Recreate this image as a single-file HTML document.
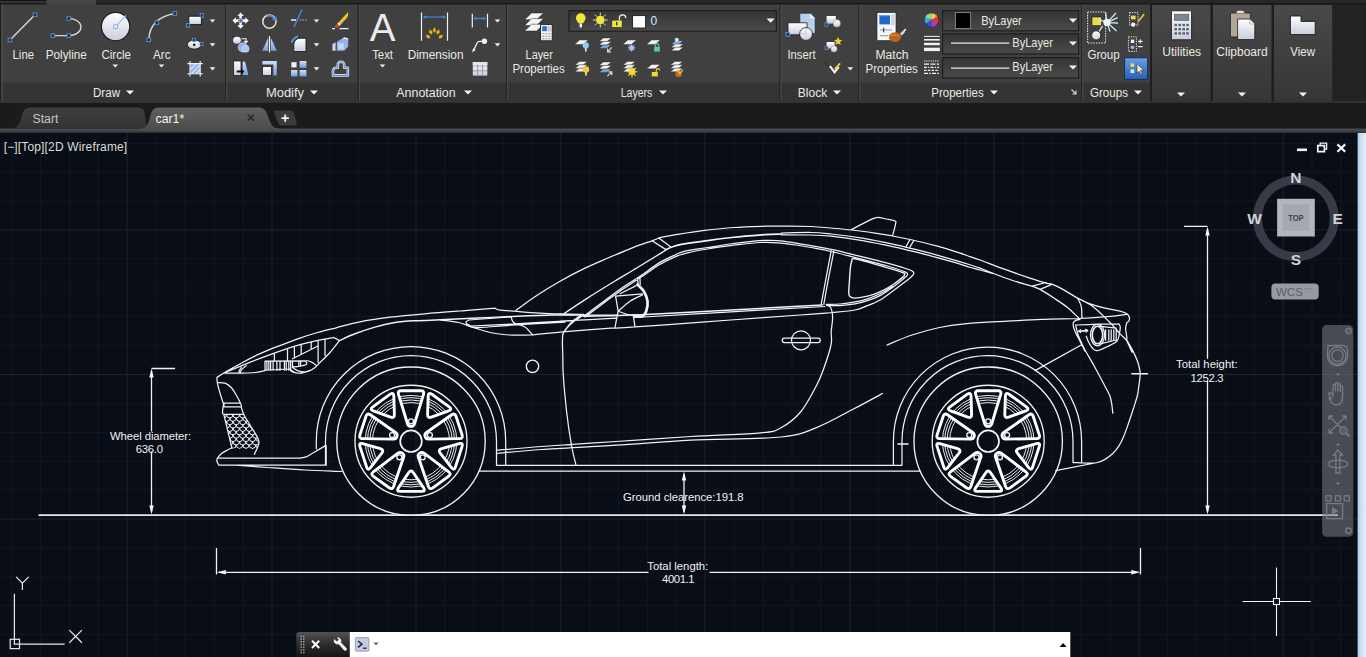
<!DOCTYPE html>
<html><head><meta charset="utf-8"><title>AutoCAD - car1</title>
<style>
*{box-sizing:border-box;margin:0;padding:0}
html,body{width:1366px;height:657px;overflow:hidden;background:#090d16;font-family:"Liberation Sans",sans-serif;}
#app{position:relative;width:1366px;height:657px;overflow:hidden;background:#090d16}
#draw{position:absolute;left:0;top:0;width:1366px;height:657px;background:#090d16;overflow:hidden}
.w1{fill:none;stroke:#eef1f5;stroke-width:1.35}
.w2{fill:none;stroke:#e6eaef;stroke-width:1}
.w3{fill:none;stroke:#ffffff;stroke-width:2.9;stroke-linejoin:round}
.w4{fill:none;stroke:#f2f4f7;stroke-width:1.7}
.dt{font-family:"Liberation Sans",sans-serif;font-size:11.3px;fill:#f0f2f5;letter-spacing:0.35px}
<!--CSS-->
</style></head>
<body><div id="app">
<div id="draw">
<svg id="dsvg" width="1366" height="657" viewBox="0 0 1366 657" style="position:absolute;left:0;top:0">
<path d="M11.5 133V657M40.5 133V657M69.5 133V657M98.5 133V657M156 133V657M185 133V657M214 133V657M243 133V657M300.5 133V657M329.5 133V657M358.5 133V657M387.5 133V657M445 133V657M474 133V657M503 133V657M532 133V657M589.5 133V657M618.5 133V657M647.5 133V657M676.5 133V657M734 133V657M763 133V657M792 133V657M821 133V657M878.5 133V657M907.5 133V657M936.5 133V657M965.5 133V657M1023 133V657M1052 133V657M1081 133V657M1110 133V657M1167.5 133V657M1196.5 133V657M1225.5 133V657M1254.5 133V657M1312 133V657M1341 133V657M0 143.5H1366M0 172H1366M0 201H1366M0 259H1366M0 288H1366M0 316.5H1366M0 345.5H1366M0 403.5H1366M0 432.5H1366M0 461H1366M0 490H1366M0 548H1366M0 577H1366M0 605.5H1366M0 634.5H1366" stroke="#10161f" stroke-width="1" fill="none"/><path d="M127 133V657M272 133V657M416 133V657M561 133V657M705 133V657M850 133V657M994 133V657M1139 133V657M1283 133V657M0 230H1366M0 374.5H1366M0 519H1366" stroke="#1a2430" stroke-width="1" fill="none"/>
<g fill="none" stroke="#f0f3f6" stroke-linecap="round" stroke-linejoin="round"><path d="M216.9 377.5C218.2 376.6 220.7 374.8 225 372.2C229.3 369.8 236.5 365.7 242.5 362.5C248.5 359.3 255 355.9 261.2 353.1C267.5 350.3 273.5 348.1 280 345.6C286.5 343.1 293.8 340.3 300 338.1C306.2 335.9 311.5 334.2 317.5 332.5C323.5 330.8 329.2 329.5 336.2 327.8C343.3 326 351 323.5 360 321.8C369 320 379.2 318.6 390 317.2C400.8 315.9 413.3 314.8 425 313.8C436.7 312.7 453.3 311.5 460 311C466.7 310.5 459.2 311.1 465 310.6C470.8 310.1 490 308.5 495 308.1M495 308.1C495.6 308.4 495.4 309.2 498.8 309.8C502.1 310.3 508.1 310.7 515 311.2C521.9 311.8 531.9 312.7 540 313.1C548.1 313.6 556.5 313.8 563.8 314C571 314.2 580.4 314.5 583.8 314.6M516.2 310C519.8 307.5 530.2 299.8 537.5 295C544.8 290.2 552.5 285.5 560 281.2C567.5 277 574.8 273.1 582.5 269.4C590.2 265.6 598.3 262.2 606.2 258.8C614.2 255.3 622.3 251.8 630 248.8C637.7 245.7 647.7 242.4 652.5 240.6C657.3 238.9 657.7 238.5 658.8 238.1M658.8 237.9C661.9 237.3 670.2 235.6 677.5 234.4C684.8 233.2 693.1 231.8 702.5 230.6C711.9 229.5 723.3 228.2 733.8 227.5C744.2 226.8 755.6 226.5 765 226.2C774.4 226 782.4 226 790 226C797.6 226 804.9 226.2 810.8 226.5C816.6 226.8 818.2 226.9 825 227.5C831.8 228.1 842.9 229.1 851.2 230C859.6 230.9 868.1 232.1 875 233.1C881.9 234.1 886.2 234.9 892.5 236C898.8 237.1 905 238.3 912.5 240C920 241.7 930.2 244.3 937.5 246.2C944.8 248.2 950.7 250.1 956.2 251.9C961.8 253.6 966.8 255.5 970.8 256.9C974.7 258.2 974.3 257.9 980 260C985.7 262.1 996.7 266.4 1005 269.4C1013.3 272.4 1023.1 275.8 1030 278.1C1036.9 280.4 1042.5 282.1 1046.2 283.1C1050 284.2 1049.4 283.1 1052.5 284.4C1055.6 285.6 1060.8 288.3 1065 290.6C1069.2 292.9 1073.3 295.9 1077.5 298.1C1081.7 300.3 1085.4 302.1 1090 303.8C1094.6 305.4 1100 306.9 1105 308.1C1110 309.4 1116.4 310.3 1120 311.2C1123.6 312.2 1125.3 312.7 1126.9 313.8C1128.4 314.8 1129.1 316.2 1129.4 317.5C1129.7 318.8 1129.2 320.4 1128.8 321.2C1128.3 322.1 1127.2 322.3 1126.9 322.5M851.2 229.8C854.6 228 866.9 221.4 871.2 219.4C875.6 217.3 875 217.6 877.5 217.5C880 217.4 883.3 218.4 886.2 219C889.2 219.6 893.4 220.2 895 221C896.6 221.8 896 221.2 895.6 223.8C895.2 226.2 893 234 892.5 236M652.5 241 L665.6 249.4M658.8 238.1 L671.2 247.2M563.8 313.8C567.7 311.1 579.4 303.3 587.5 298.1C595.6 292.9 604.2 287.6 612.5 282.5C620.8 277.4 628.8 272.8 637.5 267.5C646.2 262.2 660.3 253.6 665 250.6C669.7 247.7 665.5 249.9 665.6 249.8M781.2 233.1C786.2 233 802.4 232.4 810.8 232.5C819.1 232.6 822.6 233.1 831.2 234C839.9 234.9 852.1 236.4 862.5 238.1C872.9 239.9 883.3 242.1 893.8 244.4C904.2 246.7 915.6 249.5 925 251.9C934.4 254.3 942.4 256.6 950 258.8C957.6 260.9 965.8 263.4 970.8 265C975.8 266.6 976.4 266.8 980 268.1C983.6 269.5 987.3 271.1 992.5 273.1C997.7 275.1 1004.7 277.8 1011.2 280C1017.8 282.2 1027.1 284.7 1031.9 286.2C1036.7 287.8 1036.1 287.3 1040 289.4C1043.9 291.5 1050.4 295.7 1055 298.8C1059.6 301.8 1063.5 304.3 1067.5 307.5C1071.5 310.7 1076.9 316.4 1078.8 318.1M781.2 234.8C786.2 234.8 802.4 234.8 810.8 235C819.1 235.2 822.6 235.3 831.2 236.2C839.9 237.2 852.1 238.9 862.5 240.6C872.9 242.4 883.3 244.6 893.8 246.9C904.2 249.2 915.6 252 925 254.4C934.4 256.8 942.4 259.1 950 261.2C957.6 263.4 965.8 266 970.8 267.5C975.8 269 976.4 269 980 270C983.6 271 990.4 272.9 992.5 273.5M910 239.4 L906.2 246.2M913.8 240.6 L910 246.9M1031.9 286.2 L1046.2 282.5M1040 289.4 L1051.9 284.4M1077.5 298.1C1078.1 299.5 1080.5 302.9 1081.2 306.2C1082 309.6 1081.8 316.1 1081.9 318.1M1077.5 298.1C1080 299.5 1087.1 302.2 1092.5 306.2C1097.9 310.3 1105.4 317.9 1110 322.5C1114.6 327.1 1117.3 330.8 1120 333.8C1122.7 336.7 1124.3 337 1126.2 340C1128.2 343 1130.8 350.2 1131.9 351.9C1132.9 353.5 1131.6 348.4 1132.5 350C1133.4 351.6 1136.7 359.4 1137.5 361.2M887 345C891.2 343.3 903.2 337.9 912 335C920.8 332.1 930.8 329.4 939.5 327.5C948.2 325.6 953.2 324.8 964.5 323.8C975.8 322.7 994.2 322 1007 321.2C1019.8 320.5 1029.3 319.8 1041.2 319.4C1053.2 318.9 1068.3 318.9 1078.8 318.5C1089.2 318.1 1095.7 317.6 1103.8 316.9C1111.8 316.2 1123 314.8 1126.9 314.4M1126.9 322.5C1126.7 323.5 1125.6 326.2 1125.6 328.8C1125.6 331.2 1126.7 335.6 1126.9 337.5C1127.1 339.4 1125.9 337.9 1126.9 340C1127.8 342.1 1130.7 346.5 1132.5 350C1134.3 353.5 1136.2 357.7 1137.5 361.2C1138.8 364.8 1139.6 368.5 1140 371.2C1140.4 374 1140.2 375 1140 377.5C1139.8 380 1139.2 383.3 1138.8 386.2C1138.3 389.2 1138.3 391.5 1137.5 395C1136.7 398.5 1135.2 402.9 1133.8 407.5C1132.3 412.1 1130.4 417.7 1128.8 422.5C1127.1 427.3 1125.4 432.3 1123.8 436.2C1122.1 440.2 1120.6 443.3 1118.8 446.2C1116.9 449.2 1114.8 451.6 1112.5 453.8C1110.2 455.9 1107.5 457.9 1105 459.4C1102.5 460.8 1100 461.9 1097.5 462.5C1095 463.1 1094.1 463.1 1090 463.1C1085.9 463.1 1075.9 462.6 1073.1 462.5M1097.5 462.5 L1055.6 470.6M1081.2 342.5C1081.9 343.8 1082.7 345.8 1085 350C1087.3 354.2 1091.7 361.5 1095 367.5C1098.3 373.5 1102.5 381.5 1105 386.2C1107.5 391 1108.9 393.1 1110 396.2C1111.1 399.4 1111.4 402.2 1111.9 405C1112.3 407.8 1112.6 411.8 1112.8 413.1M1081.2 345 L1035 370.6M216.9 377.5C217 378.5 216.9 380.8 217.5 383.8C218.1 386.7 219.6 391.5 220.6 395C221.7 398.5 223.2 403.6 223.8 405C224.3 406.4 223.8 403.4 223.8 403.1M217.5 382.5C218.8 382.6 222.7 382.3 225 383.1C227.3 384 229.4 385.5 231.2 387.5C233.1 389.5 234.6 392.1 236.2 395C237.9 397.9 240.4 403 241.2 405C242.1 407 240.8 405.3 241.2 406.9C241.7 408.4 242.3 411.4 243.8 414.4C245.2 417.4 247.7 421.1 250 425C252.3 428.9 256 434.4 257.5 437.5C259 440.6 259.3 440.9 258.8 443.8C258.2 446.6 255.1 452.6 254.4 454.4M223.8 403.1 L239.4 403.1M223.1 406.9 L241.2 406.9M223.8 403.1C223.5 404.7 222.5 410.6 222.5 412.5C222.5 414.4 223.5 414.1 223.8 414.4M223.8 414.4 L243.8 414.4M223.8 414.4 L231.9 448.1M231.9 447.9C231.1 448.2 229.3 449 227.5 450C225.7 451 222.9 452.4 221.2 453.8C219.6 455.1 218.2 456.9 217.5 458.1C216.8 459.4 216.7 460.1 216.9 461.2C217.1 462.4 218.4 464.4 218.8 465M218.8 465 L326.2 465 L326.2 445.6M218.8 458.1 L300 458.1M300 458.1C301 457.9 304 457.8 306.2 456.9C308.5 455.9 310.5 454.4 313.8 452.5C317 450.6 323.6 446.8 325.6 445.6M236.2 465.2C241.5 465.6 256 466.7 267.5 467.5C279 468.3 292.6 469.3 305 470C317.4 470.7 335.7 471.2 341.9 471.5M225 372.5C228.5 371 239.2 366.6 246.2 363.8C253.3 360.9 259.8 358.4 267.5 355.6C275.2 352.8 285.2 349.2 292.5 346.9C299.8 344.6 305 343.3 311.2 341.9C317.5 340.4 326.2 338.9 330 338.1C333.8 337.4 333.1 337.6 333.8 337.5M333.8 337.5 L339.4 340.6M339.4 340.6C337.8 342.6 333 349.1 330 352.5C327 355.9 323.8 358.8 321.2 361.2C318.8 363.8 317.1 365.8 315 367.5C312.9 369.2 311.2 370.3 308.8 371.2C306.2 372.2 302.7 373 300 373.1C297.3 373.2 294.2 372.5 292.5 371.9C290.8 371.2 290.4 369.8 290 369.4M225 373.1C227.9 373.1 237.5 373.2 242.5 373.1C247.5 373 251.2 372.9 255 372.5C258.8 372.1 263.3 370.9 265 370.6M292.5 358.8 L317.5 346.2M246.2 365.6C245.5 366.2 242.9 368.1 241.9 369.4C240.8 370.6 240.3 372.5 240 373.1M241.2 367.5C240.9 368 239.8 369.7 239.4 370.6C239 371.6 238.9 372.7 238.8 373.1M274.4 353.8 L274.4 361.2M287.5 348.8 L287.5 360.6M294.4 346.5 L294.4 357.8M301.2 344.4 L301.2 354M311.2 341.9 L311.2 349M318.1 340 L318.1 362.5M325 338.8 L325 355.6M265 361.2 L305 360.9M265 370.2 L290 369M265 361.2 L265 370.2M266.9 361.2 L266.9 370.2M268.8 361.2 L268.8 370.2M270.6 361.2 L270.6 370.2M273.1 361.2 L273.1 370.2M276.9 361.2 L276.9 370.2M280 361.2 L280 370.2M284.4 361.2 L284.4 370.2M286.2 361.2 L286.2 370.2M288.8 361.2 L288.8 370.2M290.6 361.2 L290.6 370.2M292.5 361.2 L292.5 367.5M298.8 361 L298.8 366.2M300.6 361 L300.6 366.2M305 360.9C305.2 361.1 306.3 361.9 306.5 362.5C306.7 363.1 307.3 363.9 306.2 364.5C305.2 365.1 302.3 365.8 300 366.2C297.7 366.7 293.8 366.9 292.5 367M290 369C290.8 369.6 292.9 371.8 295 372.5C297.1 373.2 301.2 373.1 302.5 373.2M292.5 367.5C293.3 368 295.4 369.9 297.5 370.6C299.6 371.4 302.7 372 305 371.9C307.3 371.8 310.2 370.3 311.2 370M306.2 360.6C307.1 360.8 309.6 361.1 311.2 361.9C312.9 362.6 315.4 364.7 316.2 365.2M440 320C443.1 320.4 453.5 321.4 458.8 322.5C464 323.6 466 325.2 471.2 326.9C476.5 328.5 483.8 331.1 490 332.5C496.2 333.9 501.7 334.6 508.8 335C515.8 335.4 523.5 335.3 532.5 334.8C541.5 334.2 549.5 333 562.5 331.9C575.5 330.8 602 328.8 610.8 328.1C619.5 327.5 611 328.3 615 328.1C619 327.9 623.3 327.7 635 326.9C646.7 326.1 669 324.5 685 323.4C701 322.2 711.6 321.4 730.8 320C749.9 318.6 783 316.2 800 315C817 313.8 827.1 312.9 832.5 312.5M468.8 320 L511.2 316.9M469 320C468.5 320.3 466.6 321.2 466.2 321.9C465.9 322.5 466 323.3 466.9 324C467.7 324.7 470.5 325.9 471.2 326.2M471.2 326.2C478.5 325.8 498.1 324.7 515 323.8C531.9 322.8 562.9 321.1 572.5 320.6M471.2 327.1C472.9 327.2 474 327.9 481.2 327.5C488.5 327.1 501 325.9 515 325C529 324.1 556.7 322.7 565 322.2M511.2 316.9C511.5 317.6 511.7 320.1 512.5 321.2C513.3 322.4 514.2 323.1 516.2 324C518.3 324.9 522.3 325.1 525 326.9C527.7 328.7 531.2 333.4 532.5 334.8M583.8 315C581.9 316.2 575.8 319.6 572.5 322.5C569.2 325.4 565.4 329.6 563.8 332.5C562.1 335.4 562.7 336.2 562.5 340C562.3 343.8 562.6 349.7 562.8 355C562.9 360.3 562.8 365.4 563.1 371.9C563.5 378.4 563.9 384.9 564.8 394C565.6 403.1 567.2 417.3 568.5 426.5C569.8 435.7 571 442.5 572.2 449C573.5 455.5 575.4 462.5 576 465.2M583.8 316.2C587.1 313.8 597.3 306 603.8 301.2C610.2 296.5 616.5 291.7 622.5 287.5C628.5 283.3 634 280.3 640 276.2C646 272.2 652.9 266.7 658.8 263.1C664.6 259.6 670.6 257 675 255C679.4 253 679.6 252.5 685 251.2C690.4 250 699.4 248.8 707.5 247.5C715.6 246.2 725 244.6 733.8 243.5C742.5 242.4 752.7 241.1 760 240.6C767.3 240.1 771.5 240.2 777.5 240.6C783.5 241 790.7 242.3 796.2 243.1C801.8 244 804.9 244.6 810.8 245.6C816.6 246.7 822.6 247.5 831.2 249.4C839.9 251.2 853.1 254.6 862.5 256.9C871.9 259.2 879.6 260.9 887.5 263.1C895.4 265.3 905.6 268.3 910 270C914.4 271.7 913.5 272 913.8 273.1C914 274.3 912.3 275.7 911.2 276.9C910.2 278 910.6 277.6 907.5 280C904.4 282.4 897.1 287.9 892.5 291.2C887.9 294.6 884.2 297.6 880 300C875.8 302.4 871.7 304 867.5 305.6C863.3 307.3 860.8 308.9 855 310C849.2 311.1 836.2 312.1 832.5 312.5M585 317.1C588.3 314.6 598.5 306.9 605 302.1C611.5 297.3 617.7 292.5 623.8 288.4C629.8 284.2 635.4 281 641.2 277.1C647.1 273.2 653.1 268.4 658.8 265C664.4 261.6 670.2 258.9 675 256.9C679.8 254.8 682.1 254.1 687.5 252.8C692.9 251.4 699.8 250.2 707.5 249C715.2 247.8 725 246.3 733.8 245.2C742.5 244.2 752.7 242.9 760 242.5C767.3 242.1 771.5 242.3 777.5 242.8C783.5 243.2 790.7 244.2 796.2 245C801.8 245.8 804.9 246.4 810.8 247.5C816.6 248.6 822.6 249.5 831.2 251.5C839.9 253.5 853.1 257 862.5 259.4C871.9 261.8 880.4 263.9 887.5 266C894.6 268.1 901.7 270.5 905 271.9C908.3 273.3 907.5 273.4 907.5 274.4C907.5 275.3 907.5 275.3 905 277.5C902.5 279.7 896.7 284.5 892.5 287.5C888.3 290.5 884.2 293.4 880 295.6C875.8 297.8 871.7 299.3 867.5 300.6C863.3 302 859.6 302.9 855 303.8C850.4 304.6 844.7 305.3 840 305.6C835.3 305.9 829.1 305.6 826.9 305.6M892.5 286.2C890.4 287.5 884.2 291.7 880 293.8C875.8 295.8 871.7 297.4 867.5 298.8C863.3 300.1 859.6 301 855 301.9C850.4 302.8 844.8 303.6 840 304C835.2 304.4 828.5 304.3 826.2 304.4M831.2 250.6 L824.4 286.9 L821.2 304.4M833.8 251.2 L826.9 286.9 L823.8 304.4M635 317.5C649.6 316.6 690.9 314.2 722.5 312.4C754.1 310.5 807.7 307.5 824.8 306.5M560 314.4C564 314.5 574.4 314.9 583.8 315C593.1 315.1 610.8 315 616.2 315M560 321.2C564.2 321 575.6 320.3 585 319.8C594.4 319.2 611 318.4 616.2 318.1M582.5 314.4C580.8 315.5 575.4 318.6 572.5 321.2C569.6 323.9 566.7 327.7 565 330C563.3 332.3 562.9 334.2 562.5 335M826.2 304.4C827 304.9 829.6 306.1 830.6 307.5C831.6 308.9 831.9 310.4 832.2 312.5C832.6 314.6 832.7 316.8 832.5 320C832.3 323.2 831.5 327.7 831.2 331.9C831 336 832.3 338.8 831 345C829.7 351.2 826 362.3 823.5 369.2C821 376.2 819.8 379.5 816 386.5C812.2 393.5 806.8 404.6 801 411.5C795.2 418.4 787.7 424.2 781 427.8C774.3 431.3 776 431.3 761 432.8C746 434.2 715.2 435 691 436.5C666.8 438 640.9 439.8 616 441.5C591.1 443.2 561.3 445 541.5 446.5C521.7 448 504.4 449.6 497 450.2M497 453.5C504.4 452.8 521.7 450.9 541.5 449.5C561.3 448.1 591.1 446.8 616 445.2C640.9 443.7 663.5 441.6 691 440.2C718.5 438.9 760.2 439.1 781 437C801.8 434.9 803.9 432.4 816 427.8C828.1 423.1 842.4 414.7 853.5 409C864.6 403.3 877.7 396.1 882.5 393.5M801 340.3m-9.5 0a9.5 9.5 0 1 0 19 0a9.5 9.5 0 1 0 -19 0M784.5 338h33.5a2.3 2.3 0 0 1 0 4.6h-33.5a2.3 2.3 0 0 1 0-4.6ZM615.6 296.2 L642.5 293.8M615.6 296.2 L618.1 311.2M618.1 311.2C620.1 311.9 626.4 314.4 630 315C633.6 315.6 638.3 314.7 640 314.6M618.1 311.2C620.1 309.6 625.9 304 630 301.2C634.1 298.5 640.4 296 642.5 295M620 293.8 L636.2 285.6M637.5 278.1 L638.1 283.8M640 278.1 L640.2 284.4M618.1 311.2 L615 327.5M633.1 314.4 L635 326.9M497 465.3 L893.3 465.3M479 471 L920 471M919 471 L919.5 471M316.3 448.7L316.3 441.2A94.7 94.7 0 0 1 505.7 441.2L505.7 465.3M325.5 465L325.5 441.2A85.5 85.5 0 0 1 496.5 441.2L496.5 465.3M893.4 465.3L893.4 441.2A94.1 94.1 0 0 1 1081.6 441.2L1081.6 462.6M902 465.3L902 441.2A85.5 85.5 0 0 1 1073 441.2L1073 462.6M893.4 465.3 L902 465.3M1080 319.4C1079.1 319.7 1075.5 320.3 1074.4 321.2C1073.2 322.2 1073 323.3 1073.1 325C1073.2 326.7 1073.9 328.5 1075 331.2C1076.1 334 1078.3 337.9 1080 341.2C1081.7 344.6 1084.2 349.6 1085 351.2M1075.6 325C1079.3 324.9 1090.3 324.5 1097.5 324.2C1104.7 324 1115.2 323.8 1118.8 323.8M1118.8 323.8C1119 324.3 1120.1 325.2 1120.2 326.9C1120.4 328.5 1119.9 331.4 1119.4 333.8C1118.8 336.1 1118.9 339.1 1116.9 341.2C1114.9 343.4 1110.7 344.9 1107.5 346.5C1104.3 348.1 1099.9 350.2 1097.5 350.6C1095.1 351 1094.6 350.1 1093.1 348.8C1091.7 347.4 1089.9 344.6 1088.8 342.5C1087.6 340.4 1086.7 337.3 1086.2 336.2M1075.6 325C1076 326.7 1077 331.7 1078.1 335C1079.3 338.3 1081.8 343.3 1082.5 345M1097.5 335m-7 0a7 10.8 0 1 0 14 0a7 10.8 0 1 0 -14 0M1098.1 326.2 L1116.2 328.1M1100 343.8 L1116.2 340M1105.6 329.8 L1105.6 340.2M1108.8 329.8 L1108.8 340.2M1111.2 329.8 L1111.2 340.2M1113.8 329.8 L1113.8 340.2M1116.2 329.8 L1116.2 340.2M1080.6 329.8 L1078.8 331.2 L1080.6 332.5M1085.6 329.4 L1087.5 330.6 L1085.9 332.1" stroke-width="1.25"/><path d="M665.6 249.8C666.6 249.3 668.6 248.1 671.2 247.2C673.9 246.4 675.2 245.5 681.2 244.4C687.3 243.3 698.8 241.8 707.5 240.6C716.2 239.4 724.2 238.2 733.8 237.2C743.3 236.2 757.1 235.2 765 234.6C772.9 234.1 778.5 234.1 781.2 234M1097.5 335m-5.2 0a5.2 8.8 0 1 0 10.4 0a5.2 8.8 0 1 0 -10.4 0M1078.8 331.2 L1087.5 330.6" stroke-width="1.62"/><path d="M1131.9 373.8 L1147.5 373.8M339.4 340.6C342 339.5 348.9 336 355 333.8C361.1 331.5 369.1 328.8 375.8 326.9C382.4 325 388.5 323.5 395 322.5C401.5 321.5 407.5 321.2 415 320.8C422.5 320.3 429.6 320.2 440 319.8C450.4 319.3 465.6 318.7 477.5 318.1C489.4 317.6 498.8 317 511.2 316.5C523.8 316 540.4 315.3 552.5 315C564.6 314.7 578.5 314.7 583.8 314.6M583.8 316.2C594.2 315.9 623.1 315.4 646.2 314.4C669.4 313.4 693.2 311.9 722.5 310.4C751.8 308.8 805.6 305.9 822.2 305" stroke-width="1.5"/><path d="M532.5 366.3m-6.2 0a6.2 6.2 0 1 0 12.4 0a6.2 6.2 0 1 0 -12.4 0M855 258.8C859.7 259.5 872.1 263.3 880 265.6C887.9 267.9 898.4 271 902.5 272.5C906.6 274 904.3 273.6 904.4 274.4C904.5 275.1 905.1 275.1 903.1 276.9C901.1 278.6 896.4 282.5 892.5 285C888.6 287.5 884.2 290 880 291.9C875.8 293.8 871.7 295.2 867.5 296.2C863.3 297.3 857.8 298 855 298.1C852.2 298.2 851.7 297.6 850.6 296.9C849.6 296.1 849 296.4 848.8 293.8C848.5 291.1 849.1 285.8 849.4 281.2C849.7 276.7 850.2 269.6 850.6 266.2C851 262.9 851.1 262.5 851.9 261.2C852.6 260 850.3 258 855 258.8ZM898 444 L908 444" stroke-width="1.38"/><path d="M637.5 284.4C638.5 285.5 642.1 288.4 643.8 291.2C645.4 294.1 647.1 297.9 647.5 301.2C647.9 304.6 647.1 308.8 646.2 311.2C645.4 313.8 644.4 315.4 642.5 316.2C640.6 317.1 636.2 316.2 635 316.2" stroke-width="2.75"/><clipPath id="gcl"><path d="M223.8 414.4 L243.8 414.4 L250 425 L257.5 437.5 L258.9 443.8 L256.8 449 L232 448.2Z"/></clipPath><path clip-path="url(#gcl)" d="M220 414.8A3.2 3.2 0 0 0 226.5 414.8M226.5 414.8A3.2 3.2 0 0 0 233 414.8M233 414.8A3.2 3.2 0 0 0 239.5 414.8M239.5 414.8A3.2 3.2 0 0 0 246 414.8M246 414.8A3.2 3.2 0 0 0 252.5 414.8M252.5 414.8A3.2 3.2 0 0 0 259 414.8M259 414.8A3.2 3.2 0 0 0 265.5 414.8M223.2 418.1A3.2 3.2 0 0 0 229.8 418.1M229.8 418.1A3.2 3.2 0 0 0 236.2 418.1M236.2 418.1A3.2 3.2 0 0 0 242.8 418.1M242.8 418.1A3.2 3.2 0 0 0 249.2 418.1M249.2 418.1A3.2 3.2 0 0 0 255.8 418.1M255.8 418.1A3.2 3.2 0 0 0 262.2 418.1M220 421.5A3.2 3.2 0 0 0 226.5 421.5M226.5 421.5A3.2 3.2 0 0 0 233 421.5M233 421.5A3.2 3.2 0 0 0 239.5 421.5M239.5 421.5A3.2 3.2 0 0 0 246 421.5M246 421.5A3.2 3.2 0 0 0 252.5 421.5M252.5 421.5A3.2 3.2 0 0 0 259 421.5M259 421.5A3.2 3.2 0 0 0 265.5 421.5M223.2 424.9A3.2 3.2 0 0 0 229.8 424.9M229.8 424.9A3.2 3.2 0 0 0 236.2 424.9M236.2 424.9A3.2 3.2 0 0 0 242.8 424.9M242.8 424.9A3.2 3.2 0 0 0 249.2 424.9M249.2 424.9A3.2 3.2 0 0 0 255.8 424.9M255.8 424.9A3.2 3.2 0 0 0 262.2 424.9M220 428.2A3.2 3.2 0 0 0 226.5 428.2M226.5 428.2A3.2 3.2 0 0 0 233 428.2M233 428.2A3.2 3.2 0 0 0 239.5 428.2M239.5 428.2A3.2 3.2 0 0 0 246 428.2M246 428.2A3.2 3.2 0 0 0 252.5 428.2M252.5 428.2A3.2 3.2 0 0 0 259 428.2M259 428.2A3.2 3.2 0 0 0 265.5 428.2M223.2 431.6A3.2 3.2 0 0 0 229.8 431.6M229.8 431.6A3.2 3.2 0 0 0 236.2 431.6M236.2 431.6A3.2 3.2 0 0 0 242.8 431.6M242.8 431.6A3.2 3.2 0 0 0 249.2 431.6M249.2 431.6A3.2 3.2 0 0 0 255.8 431.6M255.8 431.6A3.2 3.2 0 0 0 262.2 431.6M220 435A3.2 3.2 0 0 0 226.5 435M226.5 435A3.2 3.2 0 0 0 233 435M233 435A3.2 3.2 0 0 0 239.5 435M239.5 435A3.2 3.2 0 0 0 246 435M246 435A3.2 3.2 0 0 0 252.5 435M252.5 435A3.2 3.2 0 0 0 259 435M259 435A3.2 3.2 0 0 0 265.5 435M223.2 438.4A3.2 3.2 0 0 0 229.8 438.4M229.8 438.4A3.2 3.2 0 0 0 236.2 438.4M236.2 438.4A3.2 3.2 0 0 0 242.8 438.4M242.8 438.4A3.2 3.2 0 0 0 249.2 438.4M249.2 438.4A3.2 3.2 0 0 0 255.8 438.4M255.8 438.4A3.2 3.2 0 0 0 262.2 438.4M220 441.8A3.2 3.2 0 0 0 226.5 441.8M226.5 441.8A3.2 3.2 0 0 0 233 441.8M233 441.8A3.2 3.2 0 0 0 239.5 441.8M239.5 441.8A3.2 3.2 0 0 0 246 441.8M246 441.8A3.2 3.2 0 0 0 252.5 441.8M252.5 441.8A3.2 3.2 0 0 0 259 441.8M259 441.8A3.2 3.2 0 0 0 265.5 441.8M223.2 445.1A3.2 3.2 0 0 0 229.8 445.1M229.8 445.1A3.2 3.2 0 0 0 236.2 445.1M236.2 445.1A3.2 3.2 0 0 0 242.8 445.1M242.8 445.1A3.2 3.2 0 0 0 249.2 445.1M249.2 445.1A3.2 3.2 0 0 0 255.8 445.1M255.8 445.1A3.2 3.2 0 0 0 262.2 445.1M220 448.5A3.2 3.2 0 0 0 226.5 448.5M226.5 448.5A3.2 3.2 0 0 0 233 448.5M233 448.5A3.2 3.2 0 0 0 239.5 448.5M239.5 448.5A3.2 3.2 0 0 0 246 448.5M246 448.5A3.2 3.2 0 0 0 252.5 448.5M252.5 448.5A3.2 3.2 0 0 0 259 448.5M259 448.5A3.2 3.2 0 0 0 265.5 448.5" stroke-width="1"/></g>
<clipPath id="wc1"><path d="M398.5 394.3Q397.4 390.7 401.2 390.7L420.8 390.7Q424.6 390.7 423.5 394.3L414.5 423.8Q413.7 426.4 411 426.4L411 426.4Q408.3 426.4 407.5 423.8ZM451.7 414.8Q454.8 412.7 456 416.3L462.1 434.9Q463.2 438.5 459.4 438.6L428.6 439.1Q425.9 439.2 425.1 436.6L425.1 436.6Q424.2 434.1 426.5 432.5ZM448.7 471.8Q451.7 474.1 448.6 476.3L432.8 487.8Q429.7 490 428.4 486.5L418.4 457.3Q417.5 454.8 419.7 453.2L419.7 453.2Q421.9 451.6 424 453.2ZM393.6 486.5Q392.3 490 389.2 487.8L373.4 476.3Q370.3 474.1 373.3 471.8L398 453.2Q400.1 451.6 402.3 453.2L402.3 453.2Q404.5 454.8 403.6 457.3ZM362.6 438.6Q358.8 438.5 359.9 434.9L366 416.3Q367.2 412.7 370.3 414.8L395.5 432.5Q397.8 434.1 396.9 436.6L396.9 436.6Q396.1 439.2 393.4 439.1ZM428.2 396Q428.4 391.8 431.8 394.2L449.2 406.9Q452.6 409.4 448.7 410.8L431.4 417.1Q427.5 418.5 427.6 414.3ZM459.3 443.6Q463.4 442.4 462.1 446.4L455.4 467Q454.1 471 451.5 467.7L440.2 453.2Q437.6 449.9 441.7 448.7ZM423.6 487.9Q426 491.4 421.8 491.4L400.2 491.4Q396 491.4 398.4 487.9L408.6 472.7Q411 469.2 413.4 472.7ZM370.5 467.7Q367.9 471 366.6 467L359.9 446.4Q358.6 442.4 362.7 443.6L380.3 448.7Q384.4 449.9 381.8 453.2ZM373.3 410.8Q369.4 409.4 372.8 406.9L390.2 394.2Q393.6 391.8 393.8 396L394.4 414.3Q394.5 418.5 390.6 417.1Z"/></clipPath><circle cx="411" cy="441.2" r="74.2" class="w1"/><circle cx="411" cy="441.2" r="56" class="w1"/><g clip-path="url(#wc1)" class="w2"><circle cx="411" cy="441.2" r="38.6"/><circle cx="411" cy="441.2" r="41.2"/><circle cx="411" cy="441.2" r="43.6"/><circle cx="411" cy="441.2" r="45.8"/></g><path d="M398.5 394.3Q397.4 390.7 401.2 390.7L420.8 390.7Q424.6 390.7 423.5 394.3L414.5 423.8Q413.7 426.4 411 426.4L411 426.4Q408.3 426.4 407.5 423.8ZM451.7 414.8Q454.8 412.7 456 416.3L462.1 434.9Q463.2 438.5 459.4 438.6L428.6 439.1Q425.9 439.2 425.1 436.6L425.1 436.6Q424.2 434.1 426.5 432.5ZM448.7 471.8Q451.7 474.1 448.6 476.3L432.8 487.8Q429.7 490 428.4 486.5L418.4 457.3Q417.5 454.8 419.7 453.2L419.7 453.2Q421.9 451.6 424 453.2ZM393.6 486.5Q392.3 490 389.2 487.8L373.4 476.3Q370.3 474.1 373.3 471.8L398 453.2Q400.1 451.6 402.3 453.2L402.3 453.2Q404.5 454.8 403.6 457.3ZM362.6 438.6Q358.8 438.5 359.9 434.9L366 416.3Q367.2 412.7 370.3 414.8L395.5 432.5Q397.8 434.1 396.9 436.6L396.9 436.6Q396.1 439.2 393.4 439.1ZM428.2 396Q428.4 391.8 431.8 394.2L449.2 406.9Q452.6 409.4 448.7 410.8L431.4 417.1Q427.5 418.5 427.6 414.3ZM459.3 443.6Q463.4 442.4 462.1 446.4L455.4 467Q454.1 471 451.5 467.7L440.2 453.2Q437.6 449.9 441.7 448.7ZM423.6 487.9Q426 491.4 421.8 491.4L400.2 491.4Q396 491.4 398.4 487.9L408.6 472.7Q411 469.2 413.4 472.7ZM370.5 467.7Q367.9 471 366.6 467L359.9 446.4Q358.6 442.4 362.7 443.6L380.3 448.7Q384.4 449.9 381.8 453.2ZM373.3 410.8Q369.4 409.4 372.8 406.9L390.2 394.2Q393.6 391.8 393.8 396L394.4 414.3Q394.5 418.5 390.6 417.1Z" class="w3"/><circle cx="411" cy="441.2" r="10.8" class="w4"/><circle cx="411" cy="421.3" r="2.5" class="w1"/><circle cx="429.9" cy="435.1" r="2.5" class="w1"/><circle cx="422.7" cy="457.3" r="2.5" class="w1"/><circle cx="399.3" cy="457.3" r="2.5" class="w1"/><circle cx="392.1" cy="435.1" r="2.5" class="w1"/><clipPath id="wc2"><path d="M975.7 394.3Q974.6 390.7 978.4 390.7L998 390.7Q1001.8 390.7 1000.7 394.3L991.7 423.8Q990.9 426.4 988.2 426.4L988.2 426.4Q985.5 426.4 984.7 423.8ZM1028.9 414.8Q1032 412.7 1033.2 416.3L1039.3 434.9Q1040.4 438.5 1036.6 438.6L1005.8 439.1Q1003.1 439.2 1002.3 436.6L1002.3 436.6Q1001.4 434.1 1003.7 432.5ZM1025.9 471.8Q1028.9 474.1 1025.8 476.3L1010 487.8Q1006.9 490 1005.6 486.5L995.6 457.3Q994.7 454.8 996.9 453.2L996.9 453.2Q999.1 451.6 1001.2 453.2ZM970.8 486.5Q969.5 490 966.4 487.8L950.6 476.3Q947.5 474.1 950.5 471.8L975.2 453.2Q977.3 451.6 979.5 453.2L979.5 453.2Q981.7 454.8 980.8 457.3ZM939.8 438.6Q936 438.5 937.1 434.9L943.2 416.3Q944.4 412.7 947.5 414.8L972.7 432.5Q975 434.1 974.1 436.6L974.1 436.6Q973.3 439.2 970.6 439.1ZM1005.4 396Q1005.6 391.8 1009 394.2L1026.4 406.9Q1029.8 409.4 1025.9 410.8L1008.6 417.1Q1004.7 418.5 1004.8 414.3ZM1036.5 443.6Q1040.6 442.4 1039.3 446.4L1032.6 467Q1031.3 471 1028.7 467.7L1017.4 453.2Q1014.8 449.9 1018.9 448.7ZM1000.8 487.9Q1003.2 491.4 999 491.4L977.4 491.4Q973.2 491.4 975.6 487.9L985.8 472.7Q988.2 469.2 990.6 472.7ZM947.7 467.7Q945.1 471 943.8 467L937.1 446.4Q935.8 442.4 939.9 443.6L957.5 448.7Q961.6 449.9 959 453.2ZM950.5 410.8Q946.6 409.4 950 406.9L967.4 394.2Q970.8 391.8 971 396L971.6 414.3Q971.7 418.5 967.8 417.1Z"/></clipPath><circle cx="988.2" cy="441.2" r="74.2" class="w1"/><circle cx="988.2" cy="441.2" r="56" class="w1"/><g clip-path="url(#wc2)" class="w2"><circle cx="988.2" cy="441.2" r="38.6"/><circle cx="988.2" cy="441.2" r="41.2"/><circle cx="988.2" cy="441.2" r="43.6"/><circle cx="988.2" cy="441.2" r="45.8"/></g><path d="M975.7 394.3Q974.6 390.7 978.4 390.7L998 390.7Q1001.8 390.7 1000.7 394.3L991.7 423.8Q990.9 426.4 988.2 426.4L988.2 426.4Q985.5 426.4 984.7 423.8ZM1028.9 414.8Q1032 412.7 1033.2 416.3L1039.3 434.9Q1040.4 438.5 1036.6 438.6L1005.8 439.1Q1003.1 439.2 1002.3 436.6L1002.3 436.6Q1001.4 434.1 1003.7 432.5ZM1025.9 471.8Q1028.9 474.1 1025.8 476.3L1010 487.8Q1006.9 490 1005.6 486.5L995.6 457.3Q994.7 454.8 996.9 453.2L996.9 453.2Q999.1 451.6 1001.2 453.2ZM970.8 486.5Q969.5 490 966.4 487.8L950.6 476.3Q947.5 474.1 950.5 471.8L975.2 453.2Q977.3 451.6 979.5 453.2L979.5 453.2Q981.7 454.8 980.8 457.3ZM939.8 438.6Q936 438.5 937.1 434.9L943.2 416.3Q944.4 412.7 947.5 414.8L972.7 432.5Q975 434.1 974.1 436.6L974.1 436.6Q973.3 439.2 970.6 439.1ZM1005.4 396Q1005.6 391.8 1009 394.2L1026.4 406.9Q1029.8 409.4 1025.9 410.8L1008.6 417.1Q1004.7 418.5 1004.8 414.3ZM1036.5 443.6Q1040.6 442.4 1039.3 446.4L1032.6 467Q1031.3 471 1028.7 467.7L1017.4 453.2Q1014.8 449.9 1018.9 448.7ZM1000.8 487.9Q1003.2 491.4 999 491.4L977.4 491.4Q973.2 491.4 975.6 487.9L985.8 472.7Q988.2 469.2 990.6 472.7ZM947.7 467.7Q945.1 471 943.8 467L937.1 446.4Q935.8 442.4 939.9 443.6L957.5 448.7Q961.6 449.9 959 453.2ZM950.5 410.8Q946.6 409.4 950 406.9L967.4 394.2Q970.8 391.8 971 396L971.6 414.3Q971.7 418.5 967.8 417.1Z" class="w3"/><circle cx="988.2" cy="441.2" r="10.8" class="w4"/><circle cx="988.2" cy="421.3" r="2.5" class="w1"/><circle cx="1007.1" cy="435.1" r="2.5" class="w1"/><circle cx="999.9" cy="457.3" r="2.5" class="w1"/><circle cx="976.5" cy="457.3" r="2.5" class="w1"/><circle cx="969.3" cy="435.1" r="2.5" class="w1"/>
<g fill="none" stroke="#eef1f5" stroke-width="1.3">
<path d="M38.500 515.200H1338" stroke-width="1.700" stroke="#e6e8ec"/>
<path d="M151.5 371V431.5M151.5 451.5V512M151.5 368.5H175"/>
<path d="M684 474V512"/>
<path d="M1207.5 229V358.7M1207.5 381V512M1184 226.3H1207.5"/>
<path d="M219 572.3H648.5M709.5 572.3H1138M216.5 548V574.5M1140.5 548V574.5"/>
</g>
<g fill="#f4f6f8" stroke="none">
<path d="M151.5 368.5l-2.200 9h4.400zM151.5 514.5l-2.200-9h4.400z"/>
<path d="M684 471.5l-2.200 9h4.400zM684 514.5l-2.200-9h4.400z"/>
<path d="M1207.5 226.5l-2.200 9h4.400zM1207.5 514.5l-2.200-9h4.400z"/>
<path d="M216.8 572.3l9-2.200v4.400zM1140.3 572.3l-9-2.200v4.400z"/>
</g>
<text class="dt" x="110" y="439.7" textLength="81.5" lengthAdjust="spacing">Wheel diameter:</text>
<text class="dt" x="135.8" y="452.7" textLength="27.5" lengthAdjust="spacing">636.0</text>
<text class="dt" x="623" y="500.8" textLength="121" lengthAdjust="spacing">Ground clearence:191.8</text>
<text class="dt" x="647.3" y="569.6" textLength="61.3" lengthAdjust="spacing">Total length:</text>
<text class="dt" x="662" y="583.4" textLength="33" lengthAdjust="spacing">4001.1</text>
<text class="dt" x="1176" y="367.6" textLength="62" lengthAdjust="spacing">Total height:</text>
<text class="dt" x="1190.5" y="381.6" textLength="33.5" lengthAdjust="spacing">1252.3</text>

</svg>
<svg id="ov" width="1366" height="657" viewBox="0 0 1366 657" style="position:absolute;left:0;top:0" font-family="Liberation Sans, sans-serif">
<defs>
<linearGradient id="gstrip" x1="0" y1="0" x2="1" y2="0"><stop offset="0" stop-color="#a9c9ea"/><stop offset="0.350" stop-color="#c9def3"/><stop offset="1" stop-color="#e6eff9"/></linearGradient>
<linearGradient id="gcmd" x1="0" y1="0" x2="0" y2="1"><stop offset="0" stop-color="#525252"/><stop offset="0.500" stop-color="#2c2c2c"/><stop offset="1" stop-color="#151515"/></linearGradient>
</defs>
<text x="3.700" y="151" font-size="12px" fill="#dcdcdc" textLength="123.500" lengthAdjust="spacing">[−][Top][2D Wireframe]</text>
<!-- window controls -->
<path d="M1297 149.800h10" stroke="#f4f4f4" stroke-width="2.600"/>
<path d="M1317.800 145.600h6.600v6h-6.600z" fill="none" stroke="#f4f4f4" stroke-width="1.700"/><path d="M1320.200 145v-1.800h6.400v6h-1.800" fill="none" stroke="#f4f4f4" stroke-width="1.300"/>
<path d="M1337.400 144.400l7.800 7.400M1345.200 144.400l-7.800 7.400" stroke="#f4f4f4" stroke-width="2.200"/>
<!-- viewcube -->
<circle cx="1295.900" cy="218.300" r="38.400" fill="none" stroke="#363b45" stroke-width="9"/>
<rect x="1277.100" y="198.800" width="37.700" height="37.700" fill="#b3b5bb"/><rect x="1282.800" y="204.500" width="26.300" height="26.300" fill="#a5a8af"/>
<text x="1295.900" y="221.300" font-size="9.500px" font-weight="bold" fill="#3f4450" text-anchor="middle" textLength="15.500" lengthAdjust="spacingAndGlyphs">TOP</text>
<g font-size="15.500px" font-weight="bold" fill="#d2d2d2" text-anchor="middle"><text x="1295.900" y="182.600">N</text><text x="1295.900" y="265">S</text><text x="1254.600" y="223.900">W</text><text x="1337.600" y="223.900">E</text></g>
<rect x="1271.400" y="283.400" width="47.300" height="16" rx="4" fill="#989aa2"/><text x="1276" y="295.600" font-size="11.500px" fill="#585c66">WCS</text><path d="M1304.600 288.600h8l-4 4z" fill="none" stroke="#868993" stroke-width="1"/>
<!-- nav bar -->
<rect x="1322.100" y="325.100" width="31.200" height="211.600" rx="4.500" fill="#7a7d82" fill-opacity="0.560"/>
<g fill="none" stroke="#787b80" stroke-width="1.300">
<circle cx="1348.500" cy="331" r="2.800"/><path d="M1346.900 329.400l3.200 3.200M1350.100 329.400l-3.200 3.200" stroke-width="0.800"/>
<circle cx="1348.500" cy="530.800" r="2.800"/>
<path d="M1328 345.500h14.500a5 5 0 0 1 5 5v5a10 10 0 0 1-20 .500z"/><circle cx="1337.500" cy="355.600" r="5.800"/><circle cx="1337.500" cy="355.600" r="8.600"/>
<path d="M1331.500 398.500c-2-2.500-3.500-4.500-2.500-5.500 1.500-1 3 1 4 2.500v-9.500c0-2 2.400-2 2.400 0v5.500-7.500c0-2 2.400-2 2.400 0v7.500-6.500c0-2 2.400-2 2.400 0v7-4.500c0-2 2.400-2 2.400 0v9c0 5-2 8.500-6.500 8.500-3.500 0-5-2-7-6.500z"/>
<path d="M1329 416l13.500 13.500M1346 416l-17 17M1329 416h4M1329 416v4M1346 416h-4M1346 416v4M1329 433h4M1329 433v-4"/><circle cx="1343.500" cy="430.500" r="3.600" fill="#5a5d62"/><path d="M1346 433l3.500 3.500" stroke-width="2"/>
<ellipse cx="1337.900" cy="464" rx="10" ry="3.800"/><path d="M1335.900 473v-18h-2.500l4.500-5 4.500 5h-2.500v18z"/>
<rect x="1326" y="495.800" width="5" height="5"/><rect x="1335.400" y="495.800" width="5" height="5"/><rect x="1344.200" y="495.800" width="5" height="5"/>
<rect x="1326.600" y="503.600" width="16" height="15"/>
</g>
<path d="M1332 507l6.500 4-6.500 4z" fill="#787b80"/>
<path d="M1335.700 373.500h4.400l-2.200 2.600zM1335.700 443.800h4.400l-2.200 2.600zM1335.700 482.600h4.400l-2.200 2.600z" fill="#787b80"/>
<!-- right strip -->
<rect x="1357.600" y="132.800" width="8.400" height="524.200" fill="url(#gstrip)"/>
<!-- UCS -->
<g fill="none" stroke="#e4e6ea" stroke-width="1.250"><path d="M16.100 576.900l6.300 6.300l6.300-6.300M22.400 583.200v6.700M14.400 593.700v50.400H64.700M69.300 630.100l12.600 12.600M81.900 630.100l-12.600 12.600"/><rect x="10.200" y="639.300" width="9.300" height="9.300"/></g>
<!-- crosshair -->
<g fill="none" stroke="#f0f2f5" stroke-width="1.100"><path d="M1242.500 601.500h31M1279.500 601.500h31.500M1276.500 567.500v31M1276.500 604.500v31.500"/><rect x="1273.500" y="598.500" width="6" height="6"/></g>
<!-- command line -->
<path d="M296.300 657v-22a3 3 0 0 1 3-3h51v25z" fill="url(#gcmd)"/>
<rect x="349.800" y="632" width="720.500" height="25" fill="#ffffff"/>
<g fill="#9a9a9a"><rect x="300.500" y="635.600" width="1.500" height="1.500"/><rect x="300.500" y="638.300" width="1.500" height="1.500"/><rect x="300.500" y="641" width="1.500" height="1.500"/><rect x="300.500" y="643.700" width="1.500" height="1.500"/><rect x="300.500" y="646.400" width="1.500" height="1.500"/><rect x="300.500" y="649.100" width="1.500" height="1.500"/><rect x="300.500" y="651.800" width="1.500" height="1.500"/><rect x="303" y="635.600" width="1.500" height="1.500"/><rect x="303" y="638.300" width="1.500" height="1.500"/><rect x="303" y="641" width="1.500" height="1.500"/><rect x="303" y="643.700" width="1.500" height="1.500"/><rect x="303" y="646.400" width="1.500" height="1.500"/><rect x="303" y="649.100" width="1.500" height="1.500"/><rect x="303" y="651.800" width="1.500" height="1.500"/></g>
<path d="M312 640.800l7.200 7.200M319.200 640.800l-7.200 7.200" stroke="#ffffff" stroke-width="2"/>
<path d="M334.200 639.400a3.600 3.600 0 0 0 4.600 4.600l5.400 6.200a1.500 1.500 0 0 0 2.200-2l-5.600-5.800a3.600 3.600 0 0 0-3.400-5l1.400 2.400-1.800 1.800z" fill="#f4f4f4" stroke="#d8d8d8" stroke-width="0.500"/>
<rect x="355.300" y="637.600" width="13.600" height="13.600" rx="1" fill="#c6cadd" stroke="#8a8fa8" stroke-width="0.800"/><path d="M358 641l4 3.200-4 3.200" fill="none" stroke="#1c2340" stroke-width="1.500"/><path d="M363 648.200h3.600" stroke="#1c2340" stroke-width="1.300"/>
<path d="M373.300 642.400h5.400l-2.700 3z" fill="#6a6a6a"/>
<path d="M1059.600 647h7l-3.500-4z" fill="#000"/>
</svg>

</div>
<svg id="rib" width="1366" height="133" viewBox="0 0 1366 133" style="position:absolute;left:0;top:0" font-family="Liberation Sans, sans-serif">
<defs>
<linearGradient id="gw" x1="0" y1="0" x2="0" y2="1"><stop offset="0" stop-color="#ffffff"/><stop offset="1" stop-color="#c9cddc"/></linearGradient>
<linearGradient id="gb" x1="0" y1="0" x2="0" y2="1"><stop offset="0" stop-color="#cfe0f7"/><stop offset="1" stop-color="#6f9fdc"/></linearGradient>
<linearGradient id="gp" x1="0" y1="0" x2="0" y2="1"><stop offset="0" stop-color="#494949"/><stop offset="1" stop-color="#363636"/></linearGradient>
<linearGradient id="gd" x1="0" y1="0" x2="0" y2="1"><stop offset="0" stop-color="#353535"/><stop offset="0.5" stop-color="#3f3f3f"/><stop offset="1" stop-color="#4a4a4a"/></linearGradient>
<linearGradient id="gsel" x1="0" y1="0" x2="0" y2="1"><stop offset="0" stop-color="#6a9eea"/><stop offset="1" stop-color="#2c5fb4"/></linearGradient>
<linearGradient id="gtab" x1="0" y1="0" x2="0" y2="1"><stop offset="0" stop-color="#606060"/><stop offset="1" stop-color="#4b4b4b"/></linearGradient>
<linearGradient id="gtab2" x1="0" y1="0" x2="0" y2="1"><stop offset="0" stop-color="#3e3e3e"/><stop offset="1" stop-color="#333333"/></linearGradient>
<linearGradient id="gband" x1="0" y1="0" x2="0" y2="1"><stop offset="0" stop-color="#4e5053"/><stop offset="1" stop-color="#33373d"/></linearGradient>
<g id="sq"><rect x="-1.8" y="-1.8" width="3.6" height="3.6" fill="#1f2c46" stroke="#5f8fd8" stroke-width="0.9"/></g>
<path id="tr" d="M-2.8 -1.6h5.6l-2.800 3.200z" fill="#f2f2f2"/>
<path id="trb" d="M-4 -2.2h8l-4 4.2z" fill="#f4f4f4"/>
</defs>
<!-- backgrounds -->
<rect x="0" y="0" width="1366" height="103" fill="#232323"/>
<rect x="0" y="0" width="1366" height="4.600" fill="#272727"/>
<rect x="0" y="0" width="46.600" height="1" fill="#121212"/><rect x="0" y="1" width="46.600" height="2.400" fill="#313131"/>
<rect x="0" y="3.400" width="1366" height="1.300" fill="#151515"/>
<rect x="46.600" y="0" width="49.600" height="5" fill="#464646"/>
<rect x="1.5" y="4.5" width="1149" height="78.5" fill="#404040"/>
<rect x="1.5" y="82.5" width="1149" height="19" fill="#343434"/>
<rect x="0" y="4.5" width="1.5" height="97" fill="#1e1e1e"/>
<rect x="1.5" y="4.5" width="1" height="97" fill="#5a5a5a"/>
<g fill="#262626"><rect x="225" y="5" width="1.4" height="96"/><rect x="357.6" y="5" width="1.4" height="96"/><rect x="505.8" y="5" width="1.4" height="96"/><rect x="779.2" y="5" width="1.4" height="96"/><rect x="858" y="5" width="1.4" height="96"/><rect x="1081" y="5" width="1.4" height="96"/></g>
<g fill="#4b4b4b"><rect x="226.4" y="5" width="1" height="96"/><rect x="359" y="5" width="1" height="96"/><rect x="507.2" y="5" width="1" height="96"/><rect x="780.6" y="5" width="1" height="96"/><rect x="859.4" y="5" width="1" height="96"/><rect x="1082.4" y="5" width="1" height="96"/></g>
<rect x="1150" y="4.5" width="216" height="98" fill="#1e1e1e"/>
<rect x="1152" y="5" width="58.5" height="96" fill="url(#gp)"/><rect x="1213" y="5" width="58.5" height="96" fill="url(#gp)"/><rect x="1274" y="5" width="58.3" height="96" fill="url(#gp)"/>
<rect x="1333" y="5" width="31.5" height="96.5" fill="#222222"/>
<rect x="0" y="101.5" width="1366" height="1.2" fill="#454545"/>
<!-- Draw panel -->
<g>
<path d="M10 40L35 14.8" stroke="#d6d6d6" stroke-width="1.4"/><use href="#sq" x="10" y="40"/><use href="#sq" x="35" y="14.8"/>
<path d="M52.9 35.6H68.8A12.2 8.55 0 0 0 68.8 18.5" stroke="#d6d6d6" stroke-width="1.4" fill="none"/><use href="#sq" x="52.9" y="35.6"/><use href="#sq" x="68.8" y="35.6"/><use href="#sq" x="68.8" y="18.5"/>
<circle cx="115.6" cy="26.6" r="14.2" fill="url(#gw)" stroke="#1c1c1c" stroke-width="1.2"/><path d="M115.6 26.6L126 15.5" stroke="#9cc0ee" stroke-width="1.2"/><rect x="113.8" y="24.8" width="3.6" height="3.6" fill="#f4f6fb" stroke="#7ea9e6" stroke-width="0.9"/>
<path d="M148.8 39.8Q149.5 18 174.8 13.5" stroke="#d6d6d6" stroke-width="1.4" fill="none"/><use href="#sq" x="148.8" y="39.8"/><use href="#sq" x="156.9" y="22.5"/><use href="#sq" x="174.8" y="13.5"/>
<!-- rectangle -->
<rect x="188.8" y="16.2" width="12.6" height="8.4" fill="url(#gw)" stroke="#1c1c1c" stroke-width="1"/><rect x="200.2" y="13.6" width="3.2" height="3.6" fill="#27344e" stroke="#5f93e2" stroke-width="0.9"/><rect x="186.4" y="23.6" width="3.2" height="3.6" fill="#27344e" stroke="#5f93e2" stroke-width="0.9"/>
<!-- ellipse -->
<ellipse cx="194.3" cy="44.6" rx="7" ry="4.6" fill="url(#gw)" stroke="#1c1c1c" stroke-width="1"/><circle cx="194.2" cy="44.8" r="1.2" fill="#111"/><rect x="192.6" y="38.2" width="3" height="3.2" fill="#27344e" stroke="#5f93e2" stroke-width="0.8"/><rect x="200" y="42.4" width="3" height="3.2" fill="#27344e" stroke="#5f93e2" stroke-width="0.8"/>
<!-- hatch -->
<rect x="190.2" y="63.8" width="9.8" height="9.8" fill="#8eb4ea"/><path d="M191 69l5-5M192 73l8-8M196 73.5l4-4" stroke="#dbe8fa" stroke-width="1.1"/><path d="M187.4 63.6h15.4M187.4 73.8h15.4M190 61v15.4M200.2 61v15.4" stroke="#f0f0f0" stroke-width="1.1"/>
</g>
<!-- Modify panel -->
<g>
<!-- move -->
<path d="M240.6 12.4l3.4 3.6h-2.1v2.6h-2.6v-2.6h-2.1zM240.6 28.8l3.4-3.6h-2.1v-2.6h-2.6v2.6h-2.1zM232.4 20.6l3.6-3.4v2.1h2.6v2.6h-2.6v2.1zM248.8 20.6l-3.6-3.4v2.1h-2.6v2.6h2.6v2.1z" fill="#f4f4f4"/><rect x="239" y="19" width="3.2" height="3.2" fill="#3a5f9e" stroke="#9cc0ee" stroke-width="0.8"/>
<!-- rotate -->
<circle cx="269.4" cy="21.6" r="6.6" fill="none" stroke="#e4dccb" stroke-width="1.6"/><path d="M266.5 15.5A7 7 0 0 1 275 17.5l1.6-1.2-.3 4.8-4.4-1.6 1.5-1A5 5 0 0 0 267.3 17z" fill="#4f8fe0"/>
<!-- trim -->
<path d="M302 9.5L294 27" stroke="#3f86dc" stroke-width="1.5"/><path d="M291 20h5" stroke="#f0f0f0" stroke-width="1.5"/><path d="M299.5 20h8" stroke="#9db4cf" stroke-width="1.2" stroke-dasharray="1.6 1.2"/>
<!-- erase -->
<path d="M347.8 12.2c1 2 .2 4.600-1.400 6.200l-5.600 6-2.200-2.200z" fill="#f0c020"/><path d="M338.600 22.200l2.200 2.200-1.400 1.500-2.200-2.200z" fill="#f4f4f4"/><path d="M337.200 23.700l2.200 2.200c-1.400 1.700-3.200 2.400-4.600 1.600 0-1.600 1-2.700 2.400-3.800z" fill="#d0501c"/><path d="M332 28.600h3M339.500 28.600h9" stroke="#f0f0f0" stroke-width="1.3"/>
<!-- copy -->
<ellipse cx="237" cy="40.300" rx="3.900" ry="3.500" fill="url(#gw)"/><circle cx="242.800" cy="47.400" r="4.600" fill="#8eb4ea" stroke="#c9dcf5" stroke-width="0.700"/><circle cx="245.600" cy="48.800" r="3.500" fill="#a9c6ee" stroke="#dbe8fa" stroke-width="0.600"/><path d="M241.500 38.800h4.500v3.600m-1.700-1.600l1.700 2 1.700-2" stroke="#f0f0f0" stroke-width="1.100" fill="none"/>
<!-- mirror -->
<path d="M268.200 37.800v13h-6z" fill="url(#gb)"/><path d="M270.800 37.800v13h6z" fill="url(#gb)"/><path d="M269.500 36v16.500" stroke="#f4f4f4" stroke-width="1.100"/>
<!-- fillet -->
<path d="M293.800 51.600v-7.200a6.200 6.200 0 0 1 6.200-6.200h6v13.400z" fill="url(#gw)" stroke="#1c1c1c" stroke-width="0.900"/><path d="M291.600 42.800a10 10 0 0 1 6.400-6.600" stroke="#4f8fe0" stroke-width="2" fill="none"/>
<!-- explode -->
<path d="M336.800 41.800l5.400-3.200 6 1.400v6.400l-4 4.400h-7.400z" fill="#8eb4ea"/><path d="M338.200 43.200h5.600v6.200h-5.600z" fill="#c4d8f4"/><path d="M342.200 38.600l2-1.400 4 1 0 1.800z" fill="#e8f0fb"/><path d="M332.400 44.200l3.200-2v8.600h-3.200z" fill="#c4d8f4"/>
<!-- stretch -->
<path d="M233.600 61h7.400v14.600h-7.400z" fill="url(#gw)" stroke="#1c1c1c" stroke-width="0.800"/><path d="M242.200 61.200h3.200l3.600 14.400h-6.800z" fill="url(#gb)" stroke="#1c1c1c" stroke-width="0.600"/><path d="M236.800 70.600h4.400v-2.200l3.200 3.200-3.200 3.200v-2.200h-4.400z" fill="#111"/>
<!-- scale -->
<path d="M262.400 61h14.400v14.600h-3.400v-11.200h-11z" fill="url(#gb)"/><rect x="262.400" y="66.400" width="9" height="9.200" fill="url(#gw)" stroke="#1c1c1c" stroke-width="0.800"/>
<!-- array -->
<rect x="291.400" y="62.200" width="5.200" height="5.200" fill="#f0f0f0"/><rect x="299.600" y="61" width="6.800" height="6.800" fill="url(#gb)"/><rect x="291" y="70" width="6.400" height="6.400" fill="url(#gb)"/><rect x="299.600" y="70" width="6.800" height="6.400" fill="url(#gb)"/>
<!-- offset -->
<path d="M333 75.400v-4.400c0-1.800 1.400-3.200 3.200-3.200h1.600v-2.800c0-1.800 1.400-3.200 3.200-3.200s3.200 1.400 3.200 3.200v2.800h3.600v7.600z" fill="none" stroke="#dbe8fa" stroke-width="2.600" stroke-linejoin="round"/><path d="M333 75.400v-4.400c0-1.800 1.400-3.200 3.200-3.200h1.600v-2.800c0-1.800 1.400-3.200 3.200-3.200s3.200 1.400 3.200 3.200v2.800h3.600v7.600z" fill="none" stroke="#3f6fb4" stroke-width="0.900" stroke-linejoin="round"/>
</g>
<!-- Annotation -->
<g>
<text x="382.7" y="40.600" font-size="38.500px" fill="#ebebeb" text-anchor="middle">A</text>
<path d="M421.500 12.500v28.300M447.500 12.500v28.300" stroke="#f2f2f2" stroke-width="1.200"/><path d="M425 17h19" stroke="#3f86dc" stroke-width="1.200"/><path d="M422.600 17l3.400-1.800v3.600zM446.400 17l-3.400-1.800v3.600z" fill="#3f86dc"/>
<g fill="#f0c020" stroke="#b87a10" stroke-width="0.400"><path d="M434.400 27.200l1.600 3.200-1.600 2.400-1.600-2.400z"/><path d="M429.600 29.400l2.700 2.200-.4 2.800-2.600-1.400z"/><path d="M439.200 29.400l-2.700 2.200.4 2.800 2.600-1.400z"/><path d="M426 34.800l3.400.8.800 2.600-3.200-.2z"/><path d="M442.800 34.800l-3.400.8-.8 2.600 3.200-.2z"/></g>
<path d="M472.300 13.800v13.800M487.500 13.800v13.800" stroke="#f2f2f2" stroke-width="1.200"/><path d="M475 18.500h10" stroke="#3f86dc" stroke-width="1.300"/><path d="M473.200 18.500l3.200-1.800v3.600zM486.600 18.500l-3.200-1.800v3.600z" fill="#3f86dc"/>
<circle cx="484.400" cy="41.300" r="2.700" fill="#f2f2f2"/><path d="M481.800 41.300h-2.400c-1.400 0-2 .8-2.600 2.200l-3.200 7" stroke="#f2f2f2" stroke-width="1.300" fill="none"/><path d="M472.300 52.400l.6-4 2.800 1.400z" fill="#f2f2f2"/>
<rect x="472.800" y="62" width="14.500" height="13.600" fill="url(#gw)"/><path d="M472.800 66h14.500M472.800 70.800h14.500M477.600 62v13.600M482.500 62v13.600" stroke="#8a8f9c" stroke-width="0.800"/><rect x="472.800" y="62" width="14.500" height="2.600" fill="#e6e6e6"/>
</g>
<!-- Layers -->
<g>
<g id="lyr3"><path d="M524.600 19.800l7-6.800h12l-7 6.800z" fill="#f4f4f4" stroke="#222" stroke-width="0.500"/><path d="M524.600 25.400l7-6.800h12l-7 6.800z" fill="#f4f4f4" stroke="#222" stroke-width="0.500"/><path d="M524.600 31l7-6.800h12l-7 6.800z" fill="#f4f4f4" stroke="#222" stroke-width="0.500"/></g>
<rect x="540.600" y="24.400" width="11.600" height="16.400" fill="#f6f6f6" stroke="#1c1c1c" stroke-width="0.900"/><rect x="542.200" y="26.200" width="4.600" height="5" fill="#2d6fd0"/><path d="M548.200 26.400v5M550 26.400v5" stroke="#9a9a9a" stroke-width="0.900"/><path d="M542.400 33.800h8M542.400 36.400h8M542.400 38.800h8" stroke="#7c8088" stroke-width="0.900" stroke-dasharray="2 1"/>
<rect x="569" y="10.600" width="207.300" height="20.600" fill="url(#gd)" stroke="#1f1f1f" stroke-width="1.200"/>
<!-- bulb -->
<path d="M580.800 13.200c2.800 0 4.800 2.200 4.800 4.800 0 2.200-1.600 3.600-2.400 5.200h-4.800c-.8-1.600-2.400-3-2.400-5.200 0-2.600 2-4.800 4.800-4.800z" fill="#f2e53a"/><path d="M579.600 23.400h2.400v4h-2.400z" fill="#f4f4f4"/>
<!-- sun -->
<circle cx="600.300" cy="20" r="4.300" fill="#f2e53a"/><path d="M600.300 12.600v3M600.300 24.400v3M592.900 20h3M604.700 20h3M595 14.700l2.200 2.200M603.400 23.100l2.200 2.200M595 25.300l2.200-2.200M603.400 16.900l2.200-2.200" stroke="#e8e4a0" stroke-width="1"/>
<!-- lock -->
<rect x="612.200" y="20.600" width="9.600" height="6.400" fill="#f2e53a"/><rect x="616" y="22" width="1.400" height="3.400" fill="#333"/><path d="M619.400 20.600v-2.600c0-2 1.400-3.200 3.200-3.200s3.200 1.200 3.200 3.200" stroke="#f4f4f4" stroke-width="1.300" fill="none"/>
<rect x="632.600" y="15.600" width="13" height="12.400" fill="#fdfdfd" stroke="#1c1c1c" stroke-width="0.900"/>
<!-- small layer icons row1 -->
<g id="pl1"><path d="M574.600 44.400l5-4.400h8.600l-5 4.400z" fill="#f4f4f4" stroke="#222" stroke-width="0.400"/></g>
<circle cx="585.800" cy="45.400" r="3.100" fill="#8fd0ee"/><path d="M585 48.200h1.600v3.400h-1.600z" fill="#e8f2fa"/>
<g id="st3"><path d="M599 41.600l4.400-3.600h8l-4.400 3.600z" fill="#f4f4f4" stroke="#222" stroke-width="0.400"/><path d="M599 45l4.400-3.600h8l-4.400 3.600z" fill="#f4f4f4" stroke="#222" stroke-width="0.400"/><path d="M599 48.400l4.400-3.600h8l-4.400 3.600z" fill="#7ea6e4" stroke="#222" stroke-width="0.400"/></g>
<path d="M611.800 47.400l-4.200 4.400m0-3.400v3.400h3.400" stroke="#d8d8d8" stroke-width="1.200" fill="none"/>
<use href="#pl1" x="48.200" y="0"/><path d="M631.600 44.400v7M628.100 47.900h7M629.100 45.400l5 5M629.100 50.400l5-5" stroke="#a9c8f2" stroke-width="1.200"/>
<use href="#pl1" x="72" y="0"/><rect x="654.200" y="46.800" width="5.600" height="4.800" fill="#63c7b8"/><path d="M655.400 46.800v-1.400c0-1 .8-1.800 1.700-1.800s1.700.8 1.700 1.800v1.400" stroke="#63c7b8" stroke-width="1.100" fill="none"/>
<g id="st3b"><path d="M671 44.400l4.400-3.600h8l-4.400 3.600z" fill="#8eb4ea" stroke="#222" stroke-width="0.400"/><path d="M671 47.600l4.400-3.600h8l-4.400 3.600z" fill="#f4f4f4" stroke="#222" stroke-width="0.400"/><path d="M671 50.800l4.400-3.600h8l-4.400 3.600z" fill="#f4f4f4" stroke="#222" stroke-width="0.400"/></g><circle cx="676.800" cy="39.800" r="2" fill="#dbe8fa"/>
<!-- row2 -->
<g id="st3c"><path d="M575 65l4.400-3.600h8l-4.400 3.600z" fill="#f4f4f4" stroke="#222" stroke-width="0.400"/><path d="M575 68.400l4.400-3.600h8l-4.400 3.600z" fill="#f4f4f4" stroke="#222" stroke-width="0.400"/><path d="M575 71.800l4.400-3.600h8l-4.400 3.600z" fill="#f4f4f4" stroke="#222" stroke-width="0.400"/></g>
<circle cx="586" cy="69.400" r="3.200" fill="#f2c93a"/><path d="M585.200 72.200h1.600v3.400h-1.600z" fill="#f4f0d8"/>
<use href="#st3" x="0" y="24"/><path d="M607.400 76.200l4.400-4.400m-3.400 0h3.400v3.400" stroke="#d8d8d8" stroke-width="1.200" fill="none"/>
<use href="#st3c" x="48" y="0"/><circle cx="632" cy="71.800" r="3.300" fill="#f2d93a"/><path d="M632 66.400v11M626.500 71.800h11M628.200 68l7.600 7.600M628.200 75.600l7.600-7.600" stroke="#f2d93a" stroke-width="1.100"/>
<use href="#pl1" x="72" y="24.400"/><rect x="651.800" y="72" width="6" height="4.400" fill="#f2d93a"/><path d="M656.200 72v-1.600c0-1 .8-1.800 1.700-1.800s1.700.8 1.700 1.800" stroke="#f2d93a" stroke-width="1.100" fill="none"/>
<use href="#st3c" x="95.400" y="0"/><circle cx="678.600" cy="74" r="3.300" fill="#c8681c"/><path d="M677.400 70.200l2.400 3.400 3-3.600" stroke="#f2c93a" stroke-width="1.200" fill="none"/>
</g>
<!-- Block -->
<g>
<path d="M799.800 13.200h10.400l5 5v15.200h-15.400z" fill="#b7d0f2" stroke="#1c1c1c" stroke-width="0.700"/><path d="M810.200 13.200v5h5z" fill="#f4f8fd"/>
<rect x="788" y="22.800" width="19" height="12" fill="url(#gw)" stroke="#1c1c1c" stroke-width="0.800"/><circle cx="806" cy="34" r="6.400" fill="url(#gw)" stroke="#1c1c1c" stroke-width="0.800"/><path d="M806 34v-5.600M806 34h-5.600" stroke="#b9bfd0" stroke-width="0.700"/><rect x="786" y="32.400" width="3.600" height="3.800" fill="#27344e" stroke="#5f93e2" stroke-width="0.900"/>
<rect x="826.600" y="16" width="9.200" height="7.600" fill="url(#gw)"/><circle cx="836.800" cy="23.400" r="3.800" fill="url(#gw)" stroke="#555" stroke-width="0.400"/><rect x="825" y="23" width="3" height="3.200" fill="#27344e" stroke="#5f93e2" stroke-width="0.800"/>
<rect x="826.600" y="42" width="8" height="6.400" fill="url(#gw)"/><circle cx="834" cy="49" r="3.200" fill="url(#gw)" stroke="#555" stroke-width="0.400"/><rect x="825" y="46.600" width="2.800" height="3" fill="#27344e" stroke="#5f93e2" stroke-width="0.800"/><path d="M838 37l1.400 2.800 3 .4-2.400 1.800.8 3-2.800-1.600-2.600 1.600.8-3-2.200-1.800 2.800-.4z" fill="#f2c93a"/>
<path d="M829 66.600l5.600 7.400 5-6.400-1.800-1.400-3.400 4.200-3.600-4.800z" fill="#f4f4f4"/><path d="M825.600 62c.4 2.400 1.600 3.800 3.400 4.600" stroke="#222" stroke-width="1" fill="none"/><path d="M834 68.600l5.400-5.800 1.400 1.200-5.400 5.800z" fill="#f2c93a"/>
</g>
<!-- Properties -->
<g>
<rect x="877" y="12.600" width="19" height="28" fill="#f4f6fa" stroke="#1c1c1c" stroke-width="0.600"/><rect x="879.400" y="15" width="10.600" height="9.400" fill="#1f68c8"/><rect x="879.400" y="15" width="10.600" height="1.200" fill="#6aa2ea"/><path d="M892 14.400v11M893.800 14.400v11" stroke="#b9bfc9" stroke-width="1"/><path d="M880 30h12M880 35.800h8" stroke="#8a8f9c" stroke-width="1.100"/><path d="M883.600 27.600v4.800" stroke="#4a5568" stroke-width="1.400"/>
<path d="M889 35.400c2.400-3 6.400-4 9.600-2.400l2.400 1.600c.8 2.800-.8 6-4 7.200-3.200 1-6.400-.4-8-3.200z" fill="#b8651c"/><path d="M889.600 36.600c2.400-1.800 6-2.200 9.200-.6" stroke="#e8a050" stroke-width="0.900" fill="none"/><path d="M900 33.600l3.600-3.400 1.600 1.600-3.200 3.600z" fill="#d8d8d8"/><path d="M903.400 30.400l1.800-2 1.200 1.200-1.800 2z" fill="#f4f4f4"/>
<!-- colour wheel -->
<g transform="translate(931.500 20)"><path d="M0 0L0 -7.300A7.300 7.300 0 0 1 6.320 -3.650Z" fill="#f2a81c"/><path d="M0 0L6.320 -3.650A7.300 7.300 0 0 1 6.320 3.650Z" fill="#e8382c"/><path d="M0 0L6.320 3.650A7.300 7.300 0 0 1 0 7.300Z" fill="#b23cc8"/><path d="M0 0L0 7.300A7.300 7.300 0 0 1 -6.320 3.650Z" fill="#3c48d8"/><path d="M0 0L-6.320 3.650A7.300 7.300 0 0 1 -6.320 -3.650Z" fill="#2cb0d8"/><path d="M0 0L-6.320 -3.650A7.300 7.300 0 0 1 0 -7.300Z" fill="#58c83c"/><circle r="7.300" fill="none" stroke="#2a2a2a" stroke-width="0.700"/><ellipse cx="-1" cy="-3.600" rx="4.600" ry="2.400" fill="#ffffff" opacity="0.350"/></g>
<path d="M924 36.400h15.800" stroke="#f2f2f2" stroke-width="1"/><path d="M924 39.800h15.800" stroke="#f2f2f2" stroke-width="1.600"/><path d="M924 44h15.800" stroke="#f2f2f2" stroke-width="2.400"/><path d="M924 49.400h15.800" stroke="#f2f2f2" stroke-width="3.400"/>
<path d="M924 61h15" stroke="#f2f2f2" stroke-width="1.200" stroke-dasharray="1.200 1"/><path d="M924 64.200h15" stroke="#f2f2f2" stroke-width="1.200" stroke-dasharray="5 1.400"/><path d="M924 67.400h15" stroke="#f2f2f2" stroke-width="1.200" stroke-dasharray="3 1.200 1.200 1.200"/><path d="M924 70.400h15" stroke="#f2f2f2" stroke-width="1.200" stroke-dasharray="2.400 1.400"/><path d="M924 73.400h15" stroke="#f2f2f2" stroke-width="1.200" stroke-dasharray="4 1.200 1.600 1.200"/>
<rect x="942.600" y="10.600" width="136" height="20.200" fill="url(#gd)" stroke="#1f1f1f" stroke-width="1.200"/>
<rect x="942.600" y="33.800" width="136" height="20.200" fill="url(#gd)" stroke="#1f1f1f" stroke-width="1.200"/>
<rect x="942.600" y="57.600" width="136" height="20.400" fill="url(#gd)" stroke="#1f1f1f" stroke-width="1.200"/>
<rect x="955.400" y="12.600" width="15.200" height="16" fill="#000" stroke="#8a8a8a" stroke-width="0.900"/>
<path d="M951 43.200h58.400M951 68.200h58.400" stroke="#e8e8e8" stroke-width="1.200"/>
</g>
<!-- Groups -->
<g>
<rect x="1087.600" y="12" width="18" height="31" fill="none" stroke="#eaeaea" stroke-width="1.100" stroke-dasharray="1.400 1.200"/>
<rect x="1092" y="17" width="9.600" height="8.600" fill="#e8dc50" stroke="#222" stroke-width="0.600"/><path d="M1096.600 35l6-9" stroke="#f4f4f4" stroke-width="1.300"/><circle cx="1096.200" cy="35.400" r="4.600" fill="url(#gw)" stroke="#1c1c1c" stroke-width="0.900"/>
<g stroke="#cfeaf8" stroke-width="1.300"><path d="M1107 22.600l9-9.600M1107 22.600l11 .4M1107 22.600l9.600 8.400M1107 22.600l-1.400-10M1107 22.600l-8-3M1107 22.600l3 9M1107 22.600l10.600-5"/></g><circle cx="1107" cy="22.400" r="3.600" fill="#e8f6fd"/>
<rect x="1129.600" y="12.600" width="8.400" height="12.600" fill="none" stroke="#eaeaea" stroke-width="1" stroke-dasharray="1.300 1.100"/><rect x="1131" y="15.600" width="4.600" height="3.800" fill="#e8dc50"/><circle cx="1133.200" cy="24.600" r="2.200" fill="#f4f4f4"/><path d="M1137.600 21l6-7.400 1.200 1-6 7.400z" fill="#f2c93a"/>
<rect x="1128.400" y="36.800" width="8" height="14.600" fill="none" stroke="#eaeaea" stroke-width="1" stroke-dasharray="1.300 1.100"/><rect x="1130.800" y="39.600" width="3.400" height="3.400" fill="#f4f4f4"/><circle cx="1132.500" cy="47.300" r="1.900" fill="#8eb4ea"/><path d="M1138 41.400h4.600M1140.300 39.200v4.400M1138 46.600h4.600" stroke="#f0f0f0" stroke-width="1.100"/>
<rect x="1124.600" y="57.800" width="23" height="21.600" fill="url(#gsel)" stroke="#16315e" stroke-width="1"/><rect x="1130.600" y="63.400" width="3.600" height="3.600" fill="#e8dc50"/><rect x="1130.600" y="69.400" width="3.600" height="3.600" fill="#d0ecfa"/><path d="M1137 63.600v9.600l2.200-2 1.700 3.600 1.400-.7-1.700-3.500h3z" fill="#f6f0c0" stroke="#222" stroke-width="0.500"/>
</g>
<!-- Utilities / Clipboard / View -->
<g>
<rect x="1171.400" y="10.800" width="20.200" height="29" rx="1" fill="url(#gw)" stroke="#1c1c1c" stroke-width="0.900"/><rect x="1174.400" y="14.200" width="14.400" height="6.200" fill="#7c8496" stroke="#4a5060" stroke-width="0.600"/>
<g fill="#5c6472"><rect x="1174.400" y="23.800" width="2.600" height="2.400"/><rect x="1178.400" y="23.800" width="2.600" height="2.400"/><rect x="1182.400" y="23.800" width="2.600" height="2.400"/><rect x="1186.200" y="23.800" width="2.600" height="2.400"/><rect x="1174.400" y="28" width="2.600" height="2.400"/><rect x="1178.400" y="28" width="2.600" height="2.400"/><rect x="1182.400" y="28" width="2.600" height="2.400"/><rect x="1186.200" y="28" width="2.600" height="2.400"/><rect x="1174.400" y="32.200" width="2.600" height="2.400"/><rect x="1178.400" y="32.200" width="2.600" height="2.400"/><rect x="1182.400" y="32.200" width="2.600" height="2.400"/><rect x="1186.200" y="32.200" width="2.600" height="2.400"/></g>
<rect x="1230.400" y="13" width="20" height="24" rx="1" fill="#b3a696" stroke="#1c1c1c" stroke-width="0.800"/><path d="M1236.400 13.400v-1.200c0-1 1.600-1.800 4-1.800s4 .8 4 1.800v1.200z" fill="#e8e8e8" stroke="#555" stroke-width="0.500"/>
<path d="M1237.600 19h12.200l5 5v15.600h-17.200z" fill="url(#gw)" stroke="#1c1c1c" stroke-width="0.800"/><path d="M1249.800 19v5h5z" fill="#f8f8f8" stroke="#555" stroke-width="0.400"/>
<path d="M1290.400 16h10.600v5.400h14.200v13.200h-24.800z" fill="url(#gw)" stroke="#1c1c1c" stroke-width="0.900"/>
</g>

<g fill="#ece8e0" font-size="12.3px" text-anchor="middle">
<text x="23.3" y="58.5" textLength="21.5" lengthAdjust="spacingAndGlyphs">Line</text>
<text x="66.3" y="58.5" textLength="41.3" lengthAdjust="spacingAndGlyphs">Polyline</text>
<text x="116.2" y="58.5" textLength="29.5" lengthAdjust="spacingAndGlyphs">Circle</text>
<text x="161.8" y="58.5" textLength="17.5" lengthAdjust="spacingAndGlyphs">Arc</text>
<text x="382.6" y="58.5" textLength="20.8" lengthAdjust="spacingAndGlyphs">Text</text>
<text x="435.6" y="58.5" textLength="55.8" lengthAdjust="spacingAndGlyphs">Dimension</text>
<text x="539.2" y="58.5" textLength="27.2" lengthAdjust="spacingAndGlyphs">Layer</text>
<text x="538.6" y="73.1" textLength="52.3" lengthAdjust="spacingAndGlyphs">Properties</text>
<text x="801.5" y="58.5" textLength="28.1" lengthAdjust="spacingAndGlyphs">Insert</text>
<text x="892" y="58.5" textLength="32.9" lengthAdjust="spacingAndGlyphs">Match</text>
<text x="891.7" y="73.1" textLength="52.3" lengthAdjust="spacingAndGlyphs">Properties</text>
<text x="1103.6" y="58.5" textLength="32.3" lengthAdjust="spacingAndGlyphs">Group</text>
<text x="1181.7" y="56.3" textLength="38.9" lengthAdjust="spacingAndGlyphs">Utilities</text>
<text x="1242" y="56.3" textLength="51.3" lengthAdjust="spacingAndGlyphs">Clipboard</text>
<text x="1302.6" y="56.3" textLength="24.8" lengthAdjust="spacingAndGlyphs">View</text>
<text x="106.5" y="96.7" textLength="27" lengthAdjust="spacingAndGlyphs">Draw</text>
<text x="285" y="96.7" textLength="38" lengthAdjust="spacingAndGlyphs">Modify</text>
<text x="426" y="96.7" textLength="59.3" lengthAdjust="spacingAndGlyphs">Annotation</text>
<text x="636.5" y="96.7" textLength="31.6" lengthAdjust="spacingAndGlyphs">Layers</text>
<text x="812.5" y="96.7" textLength="29.4" lengthAdjust="spacingAndGlyphs">Block</text>
<text x="957.5" y="96.7" textLength="52.3" lengthAdjust="spacingAndGlyphs">Properties</text>
<text x="1109" y="96.7" textLength="38.1" lengthAdjust="spacingAndGlyphs">Groups</text>
</g>
<g fill="#ece8e0" font-size="12.6px">
<text x="981.2" y="24.5" textLength="40.6" lengthAdjust="spacingAndGlyphs">ByLayer</text>
<text x="1012.3" y="47" textLength="40.6" lengthAdjust="spacingAndGlyphs">ByLayer</text>
<text x="1012.3" y="71.3" textLength="40.6" lengthAdjust="spacingAndGlyphs">ByLayer</text>
<text x="650.6" y="24.9" fill="#d8e6f2" font-size="12px">0</text>
</g>
<g>
<use href="#tr" x="115.3" y="66"/><use href="#tr" x="161.5" y="66"/><use href="#tr" x="382.5" y="66"/>
<use href="#tr" x="212.5" y="21"/><use href="#tr" x="212.5" y="44.8"/><use href="#tr" x="212.5" y="68.8"/>
<use href="#tr" x="316.5" y="21"/><use href="#tr" x="316.5" y="44.8"/><use href="#tr" x="316.5" y="68.8"/>
<use href="#tr" x="497.5" y="21"/><use href="#tr" x="497.5" y="44.8"/>
<use href="#tr" x="850.3" y="68.8"/>
<use href="#trb" x="130" y="92.6"/><use href="#trb" x="314" y="92.6"/><use href="#trb" x="468" y="92.6"/><use href="#trb" x="663" y="92.6"/><use href="#trb" x="837" y="92.6"/><use href="#trb" x="994" y="92.6"/><use href="#trb" x="1138" y="92.6"/>
<use href="#trb" x="1181" y="94.6"/><use href="#trb" x="1242" y="94.6"/><use href="#trb" x="1303" y="94.6"/>
<use href="#trb" x="770.6" y="20.8"/><use href="#trb" x="1073" y="20.8"/><use href="#trb" x="1073" y="43.6"/><use href="#trb" x="1073" y="67.6"/>
</g>
<path d="M1071.5 89.5l4.5 4.5m0-3.6v3.6h-3.6" stroke="#d8d8d8" stroke-width="1.1" fill="none"/>

<rect x="0" y="102.700" width="1366" height="26.300" fill="#1b1b1b"/>
<rect x="0" y="128.600" width="1366" height="4.200" fill="url(#gband)"/>
<path d="M10 128.800C19 128.800 19.500 123 22 115C24 108.500 26.500 107.500 32 107.500H136C141 107.500 143.500 108.500 144.500 112L147 128.800Z" fill="url(#gtab2)"/>
<path d="M140 128.800C147 128.800 148.500 123 150.500 115C152.500 108.500 155 107.400 160 107.400H258C263.500 107.400 265.500 109.500 267.500 115C270 122 271.500 128.800 280 128.800L280 131H140Z" fill="url(#gtab)"/>
<path d="M274.500 110.600H290C292.500 110.600 293.500 111.800 294.200 114L296.600 122C297.200 124.200 296.600 125.600 294.200 125.600H282C279.500 125.600 278.500 124.400 277.600 122L274.200 112.600C273.800 111.400 273.800 110.600 274.500 110.600Z" fill="#3b3b3b"/>
<path d="M281.500 118.100h7.400M285.200 114.400v7.400" stroke="#f2f2f2" stroke-width="1.800"/>
<path d="M247.800 114.600l6 6M253.800 114.600l-6 6" stroke="#2b2b2b" stroke-width="1.700"/>
<text x="32.500" y="122.500" font-size="12.300px" fill="#c4c4c4">Start</text>
<text x="155.500" y="122.500" font-size="12.300px" fill="#f4f4f4">car1*</text>

</svg>


</div></body></html>
